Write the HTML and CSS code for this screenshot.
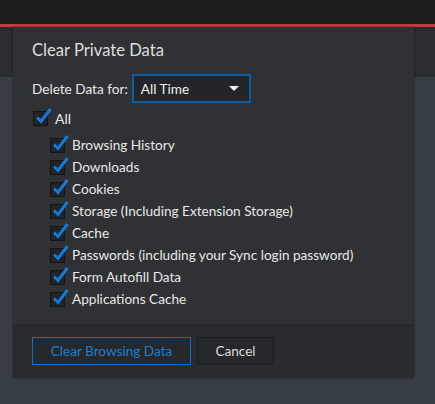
FILE: index.html
```html
<!DOCTYPE html>
<html lang="en">

<head>
    <meta charset="UTF-8">
    <title>Clear Private Data</title>
    <link rel="stylesheet" href="styles.css">
</head>

<body>

    <div class="topo"></div>
    <div class="faixa"></div>

    <div class="dialogo">
        <div class="corpo">
            <h1>Clear Private Data</h1>

            <div class="linha-periodo">
                <label>Delete Data for:</label>
                <div class="select">
                    <span>All Time</span>
                    <span class="seta"></span>
                </div>
            </div>

            <div class="item todos">
                <span class="caixa"><svg viewBox="0 0 18 18"><path d="M3 9.5 L7 13.5 L16.5 1"/></svg></span>
                All
            </div>

            <div class="lista">
                <div class="item"><span class="caixa"><svg viewBox="0 0 18 18"><path d="M3 9.5 L7 13.5 L16.5 1"/></svg></span>Browsing History</div>
                <div class="item"><span class="caixa"><svg viewBox="0 0 18 18"><path d="M3 9.5 L7 13.5 L16.5 1"/></svg></span>Downloads</div>
                <div class="item"><span class="caixa"><svg viewBox="0 0 18 18"><path d="M3 9.5 L7 13.5 L16.5 1"/></svg></span>Cookies</div>
                <div class="item"><span class="caixa"><svg viewBox="0 0 18 18"><path d="M3 9.5 L7 13.5 L16.5 1"/></svg></span>Storage (Including Extension Storage)</div>
                <div class="item"><span class="caixa"><svg viewBox="0 0 18 18"><path d="M3 9.5 L7 13.5 L16.5 1"/></svg></span>Cache</div>
                <div class="item"><span class="caixa"><svg viewBox="0 0 18 18"><path d="M3 9.5 L7 13.5 L16.5 1"/></svg></span>Passwords (including your Sync login password)</div>
                <div class="item"><span class="caixa"><svg viewBox="0 0 18 18"><path d="M3 9.5 L7 13.5 L16.5 1"/></svg></span>Form Autofill Data</div>
                <div class="item"><span class="caixa"><svg viewBox="0 0 18 18"><path d="M3 9.5 L7 13.5 L16.5 1"/></svg></span>Applications Cache</div>
            </div>
        </div>

        <div class="rodape">
            <button class="primario">Clear Browsing Data</button>
            <button>Cancel</button>
        </div>
    </div>

</body>

</html>
```

FILE: styles.css
```css
body {
    font-family: Lato, "Open Sans", sans-serif;
    margin: 0;
    background-color: #373e45;
    color: #e8e8e8;
    min-height: 100vh;
}

.topo {
    height: 24px;
    background-color: #1d1e20;
    border-bottom: 3px solid #c9383c;
}

.faixa {
    height: 50px;
    background-color: #2b2c2f;
}

.dialogo {
    position: absolute;
    left: 13px;
    top: 27px;
    width: 401px;
    background-color: #303134;
    box-shadow: 0 0 2px rgba(0, 0, 0, 0.5);
}

.corpo {
    padding: 11px 19px 14px 19px;
}

h1 {
    font-size: 16.6px;
    font-weight: normal;
    margin: 0;
    color: #dedede;
    height: 24px;
    line-height: 24px;
}

.linha-periodo {
    display: flex;
    align-items: center;
    gap: 4px;
    margin-top: 12px;
    font-size: 13.6px;
}

.select {
    display: flex;
    align-items: center;
    justify-content: space-between;
    height: 25px;
    padding: 0 10px 0 7px;
    width: 98px;
    border: 2px solid #0a5ea8;
    background-color: #242528;
    color: #f0f0f0;
}

.seta {
    width: 0;
    height: 0;
    border-left: 5px solid transparent;
    border-right: 5px solid transparent;
    border-top: 5px solid #f0f0f0;
}

.item {
    display: flex;
    align-items: center;
    gap: 7px;
    height: 22px;
    font-size: 13.6px;
    color: #e8e8e8;
}

.todos {
    margin-top: 4px;
    margin-left: 1px;
    font-size: 14px;
}

.lista {
    margin-top: 5px;
    padding-left: 18px;
}

.caixa {
    position: relative;
    width: 13px;
    height: 13px;
    border: 1px solid #151617;
    background-color: #222326;
    flex-shrink: 0;
}

.caixa svg {
    position: absolute;
    left: 0;
    top: -4px;
    width: 18px;
    height: 18px;
    fill: none;
    stroke: #1479d8;
    stroke-width: 3;
    stroke-linecap: butt;
    stroke-linejoin: miter;
}

.rodape {
    display: flex;
    gap: 6px;
    padding: 12px 19px 13px 19px;
    background-color: #2a2b2e;
    border-top: 1px solid #242528;
}

button {
    font-family: Lato, "Open Sans", sans-serif;
    font-size: 13.6px;
    height: 28px;
    padding: 0 10px;
    background-color: #27282b;
    border: 1px solid #1d1e20;
    color: #dcdcdc;
    cursor: pointer;
}

button.primario {
    width: 159px;
    border-color: #0a70cc;
    color: #1a7fd8;
}

button:last-child {
    width: 77px;
}
```
